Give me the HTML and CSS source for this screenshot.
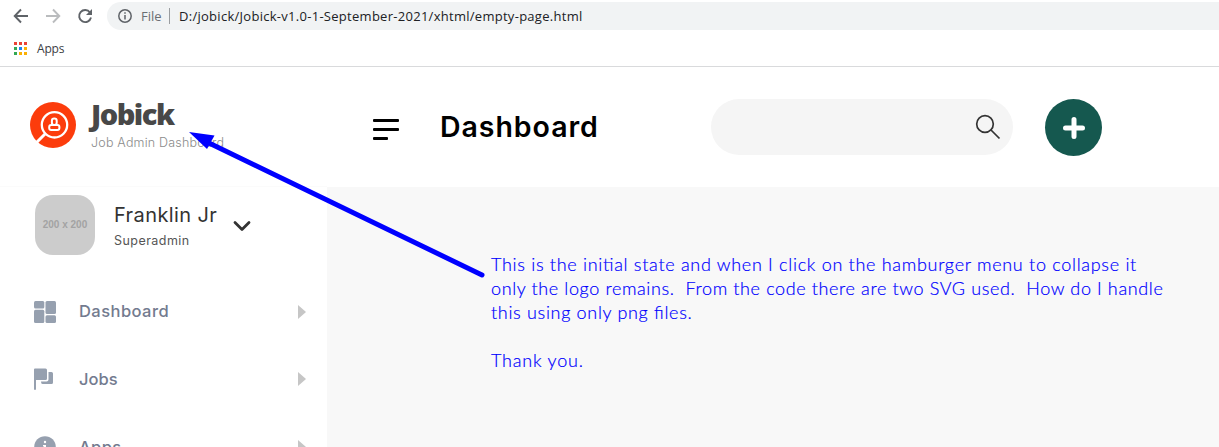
FILE: index.html
```html
<!DOCTYPE html>
<html lang="en">
<head>
<meta charset="utf-8">
<title>Jobick</title>
<link rel="stylesheet" href="styles.css">
</head>
<body>
<header class="browser">
  <div class="toolbar">
    <svg class="nav" width="94" height="32" viewBox="0 0 94 32" fill="none" stroke-width="1.9">
      <path d="M28 16H15M21 9.5L14.7 16l6.3 6.500" stroke="#5f6368"/>
      <path d="M46 16h13M53 9.500l6.300 6.500-6.300 6.500" stroke="#babcbe"/>
      <path d="M90 12.500A6 6 0 1 0 91 17.500" stroke="#5f6368"/>
      <path d="M92 9v6h-6z" fill="#5f6368"/>
    </svg>
    <div class="address">
      <svg width="16" height="16" viewBox="0 0 16 16"><circle cx="8" cy="8" r="6.200" fill="none" stroke="#5f6368" stroke-width="1.500"/><path d="M7.250 7h1.500v4.500h-1.500zM7.250 4.300h1.500v1.500h-1.500z" fill="#5f6368"/></svg>
      <span class="scheme">File</span>
      <span class="url">D:/jobick/Jobick-v1.0-1-September-2021/xhtml/empty-page.html</span>
    </div>
  </div>
  <div class="bookmarks">
    <svg width="13" height="13" viewBox="0 0 13 13" shape-rendering="crispEdges"><path d="M0 0h3v3H0zM5 0h3v3H5zM10 0h3v3h-3z" fill="#ea4335"/><path d="M0 5h3v3H0zM0 10h3v3H0z" fill="#34a853"/><path d="M5 5h3v3H5z" fill="#1a84f0"/><path d="M10 5h3v3h-3zM5 10h3v3H5zM10 10h3v3h-3z" fill="#fbb004"/></svg>
    <span class="bookmark-label">Apps</span>
  </div>
</header>
<div class="app">
  <aside class="sidebar">
    <div class="brand">
      <svg width="46" height="46" viewBox="0 0 46 46" fill="none" stroke="#fff">
        <circle cx="23" cy="23" r="23" fill="#fc3c0c" stroke="none"/>
        <circle cx="24.500" cy="22.800" r="12.700" stroke-width="2.300"/>
        <path d="M15 32l-8.500 8.500" stroke-width="3"/>
        <rect x="21.900" y="16.500" width="4.800" height="6.500" rx="2.300" stroke-width="2"/>
        <rect x="19.200" y="23" width="10.200" height="5" rx="2" stroke-width="2"/>
      </svg>
      <div class="brand-text">
        <span class="brand-name">Jobick</span>
        <span class="brand-sub">Job Admin Dashboard</span>
      </div>
    </div>
    <div class="profile">
      <div class="avatar">200 x 200</div>
      <div class="person">
        <span class="person-name">Franklin Jr</span>
        <span class="person-role">Superadmin</span>
      </div>
      <svg class="chevron" width="18" height="12" viewBox="0 0 18 12"><path d="M2 2.500l7 7 7-7" fill="none" stroke="#333" stroke-width="2.800" stroke-linecap="round" stroke-linejoin="round"/></svg>
    </div>
    <nav class="menu">
      <div class="item">
        <svg width="22" height="22" viewBox="0 0 22 22" fill="#96a0af"><rect width="10.300" height="7.500" rx="1.500"/><rect y="8.700" width="10.300" height="13.300" rx="1.500"/><rect x="11.500" width="10.500" height="13" rx="1.500"/><rect x="11.500" y="14.300" width="10.500" height="7.700" rx="1.500"/></svg>
        <span class="label dashboard">Dashboard</span><i class="caret"></i>
      </div>
      <div class="item">
        <svg width="22" height="22" viewBox="0 0 22 22" fill="#96a0af"><path d="M0 1.500Q0 .5 1 .5h10.500Q13 .5 13 2v8.500Q13 12 11.500 12H2v9q0 1-1 1t-1-1z"/><path d="M14.500 4H17.500Q19 4 19 5.500v9q0 1.500-1.500 1.500H8.500Q7 16 7 13.500h5.500q2 0 2-2z"/></svg>
        <span class="label jobs">Jobs</span><i class="caret"></i>
      </div>
      <div class="item">
        <svg width="22" height="22" viewBox="0 0 22 22"><circle cx="11" cy="11" r="10.800" fill="#96a0af"/><circle cx="11" cy="6" r="1.200" fill="#fff"/><path d="M9 9h3v7h-2v-5.500H9z" fill="#fff"/></svg>
        <span class="label apps">Apps</span><i class="caret"></i>
      </div>
    </nav>
  </aside>
  <main class="main">
    <div class="header">
      <svg class="burger" width="26" height="21" viewBox="0 0 26 21"><rect width="26" height="3" rx="1"/><rect y="9" width="26" height="3" rx="1"/><rect y="18" width="15" height="3" rx="1"/></svg>
      <h1 class="title">Dashboard</h1>
      <div class="search"><svg width="26" height="26" viewBox="0 0 26 26" fill="none" stroke="#333" stroke-width="1.700"><circle cx="10" cy="10" r="8.300"/><path d="M16 16l8.500 8.500"/></svg></div>
      <div class="add"><svg width="22" height="22" viewBox="0 0 22 22"><path d="M11 2.500v17M2.500 11h17" stroke="#fff" stroke-width="5" stroke-linecap="round"/></svg></div>
    </div>
    <div class="content">
      <p class="note"><span class="l1">This is the initial state and when I click on the hamburger menu to collapse it</span><span class="l2">only the logo remains.&nbsp; From the code there are two SVG used.&nbsp; How do I handle</span><span class="l3">this using only png files.</span><span class="l4">Thank you.</span></p>
    </div>
  </main>
</div>
<svg class="arrow" width="300" height="150" viewBox="0 0 300 150"><path d="M20 13L293 145" stroke="#00f" stroke-width="5" stroke-linecap="round"/><path d="M0 2L25.500 5.500 18 19z" fill="#00f"/></svg>
</body>
</html>
```
FILE: styles.css
```css
* { box-sizing: border-box; }
body { margin: 0; width: 1219px; height: 447px; overflow: hidden; background: #fff; font-family: Inter, "Open Sans", sans-serif; position: relative; }
svg { display: block; flex: none; }
span { white-space: nowrap; }
.browser { height: 67px; border-bottom: 1px solid #d9dadc; font-family: "Open Sans", "Noto Sans", sans-serif; }
.toolbar { height: 31px; display: flex; }
.nav { margin-right: 13px; }
.address { flex: 1; margin-top: 2px; height: 28px; background: #f1f3f4; border-radius: 14px 0 0 14px; display: flex; align-items: center; padding-left: 10px; font-size: 13px; }
.scheme { color: #6b6f73; margin-left: 8px; padding-right: 7px; border-right: 1px solid #9a9da0; line-height: 16px; width: 29px; }
.url { color: #202124; margin-left: 9px; letter-spacing: 0.280px; }
.bookmarks { height: 34px; display: flex; align-items: center; padding-left: 14px; }
.bookmark-label { font-size: 12px; color: #3c4043; margin-left: 10px; letter-spacing: -0.200px; }
.app { display: flex; height: 380px; }
.sidebar { width: 327px; flex: none; overflow: hidden; }
.brand { height: 120px; display: flex; align-items: flex-start; padding: 35px 0 0 30px; border-bottom: 1px solid #fbfbfb; }
.brand-text { display: flex; flex-direction: column; margin-left: 15px; }
.brand-name { font: 800 29px/30px "Open Sans", sans-serif; color: #484848; letter-spacing: -1.500px; margin-top: -3px; }
.brand-sub { font-size: 12.500px; line-height: 16px; font-weight: 300; color: #8c8c8c; margin-top: 6px; letter-spacing: 0.200px; }
.profile { height: 90px; display: flex; align-items: flex-start; padding: 8px 0 0 35px; }
.avatar { width: 60px; height: 60px; border-radius: 18px; background: #ccc; color: #a3a3a3; font: bold 10px/60px "Liberation Sans", Arial, sans-serif; text-align: center; }
.person { width: 119px; display: flex; flex-direction: column; margin-left: 19px; }
.person-name { font-size: 20px; line-height: 24px; margin-top: 8px; color: #333; letter-spacing: 0.400px; }
.person-role { font-size: 12.500px; line-height: 16px; margin-top: 6px; color: #555; letter-spacing: 0.450px; }
.chevron { margin-top: 25px; }
.item { height: 68px; display: flex; align-items: center; padding: 2px 21px 0 34px; }
.item:first-child { height: 67px; }
.menu { height: 204px; }
.item .label { margin: -1px 0 0 23px; flex: 1; font-size: 16.500px; font-weight: 500; color: #737b8f; letter-spacing: 0.450px; }
.item .jobs { letter-spacing: 0; }
.item .apps { letter-spacing: 0.400px; }
.caret { border-left: 8px solid #c6c6c6; border-top: 7px solid transparent; border-bottom: 7px solid transparent; }
.main { flex: 1; display: flex; flex-direction: column; }
.header { height: 120px; display: flex; align-items: flex-start; padding: 32px 0 0 46px; }
.burger { margin-top: 20px; }
.title { margin: 10px 0 0 41px; width: 271px; font-size: 28.500px; line-height: 36px; font-weight: 600; color: #000; letter-spacing: 0.950px; }
.search { width: 302px; height: 56px; border-radius: 28px; background: #f5f5f5; display: flex; align-items: center; justify-content: flex-end; padding-right: 12px; }
.add { margin-left: 32px; width: 57px; height: 57px; border-radius: 50%; background: #15584f; display: flex; align-items: center; justify-content: center; }
.content { flex: 1; background: #f8f8f8; padding: 65px 0 0 164px; }
.note { margin: 0; display: flex; flex-direction: column; align-items: flex-start; font: 300 18px/24px Lato, sans-serif; color: #00f; font-feature-settings: "liga" 1; -webkit-text-stroke: 0.200px #00f; }
.l1 { letter-spacing: 0.700px; }
.l2 { letter-spacing: 0.620px; }
.l3 { letter-spacing: 0.680px; }
.l4 { margin-top: 24px; letter-spacing: 0.800px; }
.arrow { position: absolute; left: 189px; top: 130px; }
```
